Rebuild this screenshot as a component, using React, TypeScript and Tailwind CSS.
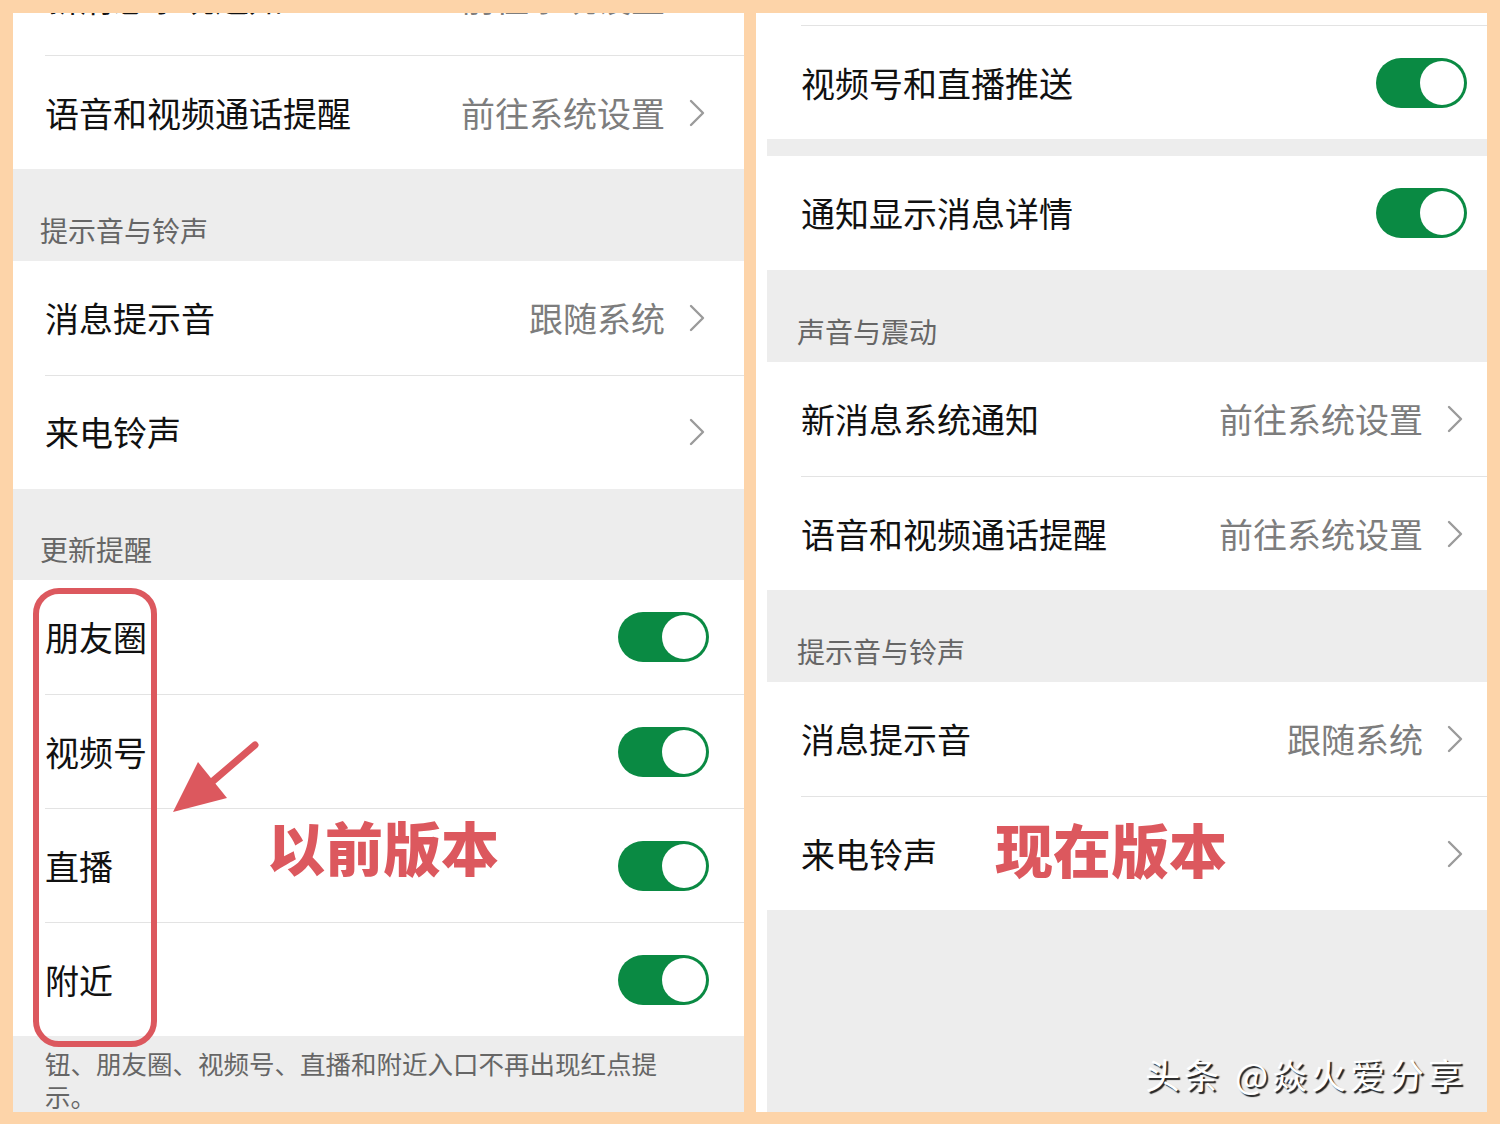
import React from 'react';

const Chevron = () => (
  <svg width="16" height="28" viewBox="0 0 16 28" className="shrink-0">
    <polyline points="2,2 14,14 2,26" fill="none" stroke="#9b9b9b" strokeWidth="2.4" strokeLinecap="round" strokeLinejoin="round" />
  </svg>
);

const Toggle = () => (
  <div className="w-[91px] h-[50px] rounded-full bg-[#0a8a43] p-[3px] flex justify-end shrink-0">
    <div className="w-[44px] h-[44px] rounded-full bg-white"></div>
  </div>
);

interface RowProps {
  label: string;
  value?: string;
  kind: 'link' | 'toggle';
  divider?: boolean;
  pl: string;
  pr: string;
  extra?: string;
}

const Row: React.FC<RowProps> = ({ label, value, kind, divider, pl, pr, extra }) => (
  <div className={`bg-white ${pl} ${extra ?? ''}`}>
    <div className={`h-[114px] flex items-center justify-between ${pr} ${divider ? 'border-t border-[#e3e3e3]' : ''}`}>
      <span className="text-[34px] text-[#111] leading-none">{label}</span>
      {kind === 'toggle' ? (
        <Toggle />
      ) : (
        <div className="flex items-center gap-[24px]">
          {value && <span className="text-[34px] text-[#7d7d7d] leading-none">{value}</span>}
          <Chevron />
        </div>
      )}
    </div>
  </div>
);

const Header = ({ title, pl }: { title: string; pl: string }) => (
  <div className={`h-[92px] bg-[#ededed] flex items-end pb-[16px] ${pl}`}>
    <span className="text-[28px] text-[#666] leading-[30px]">{title}</span>
  </div>
);

export default function App() {
  return (
    <div className="w-[1500px] h-[1124px] bg-[#fdd4a9] p-[13px] pb-[12px] grid grid-cols-[731px_731px] gap-[12px] font-['Noto_Sans_CJK_SC','Noto_Sans',sans-serif]">
      {/* left: old version */}
      <div className="relative bg-[#ededed] overflow-hidden flex flex-col">
        <Row label="新消息系统通知" value="前往系统设置" kind="link" pl="pl-[32px]" pr="pr-[39px]" extra="-mt-[72px]" />
        <Row label="语音和视频通话提醒" value="前往系统设置" kind="link" divider pl="pl-[32px]" pr="pr-[39px]" />
        <Header title="提示音与铃声" pl="pl-[27px]" />
        <Row label="消息提示音" value="跟随系统" kind="link" pl="pl-[32px]" pr="pr-[39px]" />
        <Row label="来电铃声" kind="link" divider pl="pl-[32px]" pr="pr-[39px]" />
        <Header title="更新提醒" pl="pl-[27px]" />
        <Row label="朋友圈" kind="toggle" pl="pl-[32px]" pr="pr-[35px]" />
        <Row label="视频号" kind="toggle" divider pl="pl-[32px]" pr="pr-[35px]" />
        <Row label="直播" kind="toggle" divider pl="pl-[32px]" pr="pr-[35px]" />
        <Row label="附近" kind="toggle" divider pl="pl-[32px]" pr="pr-[35px]" />
        <div className="pl-[32px] pr-[60px] pt-[10px] text-[25.5px] leading-[33px] text-[#666]">
          钮、朋友圈、视频号、直播和附近入口不再出现红点提示。
        </div>

        <div className="absolute left-[20px] top-[575px] w-[124px] h-[459px] border-[6px] border-[#dc585e] rounded-[26px]"></div>
        <svg className="absolute left-[150px] top-[720px]" width="120" height="110" viewBox="150 720 120 110">
          <line x1="242" y1="732" x2="200" y2="768" stroke="#dc585e" strokeWidth="7" strokeLinecap="round" />
          <polygon points="160,799 185,749 214,785" fill="#dc585e" />
        </svg>
        <div className="absolute left-[254px] top-[798px] text-[58px] font-black leading-[70px] text-[#dc585e]">以前版本</div>
      </div>

      {/* right: current version */}
      <div className="bg-white pl-[11px] flex">
        <div className="relative flex-1 bg-[#ededed] overflow-hidden flex flex-col">
          <div className="h-[12px] bg-white shrink-0"></div>
          <Row label="视频号和直播推送" kind="toggle" divider pl="pl-[34px]" pr="pr-[20px]" />
          <div className="h-[17px] bg-[#ededed] shrink-0"></div>
          <Row label="通知显示消息详情" kind="toggle" pl="pl-[34px]" pr="pr-[20px]" />
          <Header title="声音与震动" pl="pl-[30px]" />
          <Row label="新消息系统通知" value="前往系统设置" kind="link" pl="pl-[34px]" pr="pr-[24px]" />
          <Row label="语音和视频通话提醒" value="前往系统设置" kind="link" divider pl="pl-[34px]" pr="pr-[24px]" />
          <Header title="提示音与铃声" pl="pl-[30px]" />
          <Row label="消息提示音" value="跟随系统" kind="link" pl="pl-[34px]" pr="pr-[24px]" />
          <Row label="来电铃声" kind="link" divider pl="pl-[34px]" pr="pr-[24px]" />

          <div className="absolute left-[228px] top-[800px] text-[58px] font-black leading-[70px] text-[#dc585e]">现在版本</div>
          <div className="absolute right-[20px] bottom-[16px] text-[35px] tracking-[4px] leading-[44px] text-white [text-shadow:2px_2px_1px_#222]">
            头条 @焱火爱分享
          </div>
        </div>
      </div>
    </div>
  );
}
